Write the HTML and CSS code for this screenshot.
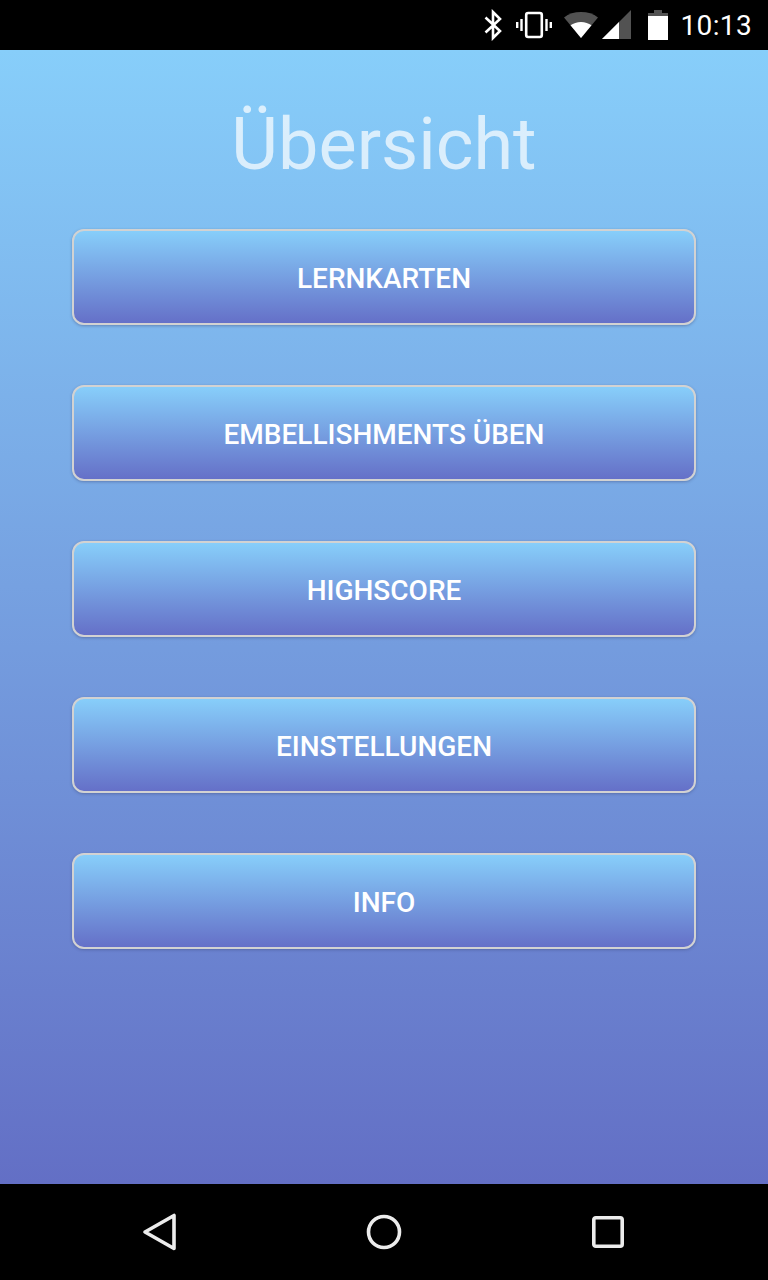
FILE: index.html
```
<!DOCTYPE html>
<html lang="de">
<head>
<meta charset="utf-8">
<title>Übersicht</title>
<link rel="stylesheet" href="styles.css">
</head>
<body>
<div class="screen">
  <header class="status">
    <svg class="ic-bt" viewBox="0 0 20 32" width="20" height="32"><path d="M2.5 8.500 17 22l-7 7V3l7 7L2.500 23.500" fill="none" stroke="#fff" stroke-width="2.600"/></svg>
    <svg class="ic-vib" viewBox="0 0 36 28" width="36" height="28"><rect x="10.200" y="2" width="15.600" height="24" rx="2" fill="none" stroke="#fff" stroke-width="2.600"/><path d="M5.500 8v12M1.200 11v6M30.500 8v12M34.800 11v6" stroke="#fff" stroke-width="2.400" fill="none"/></svg>
    <svg class="ic-wifi" viewBox="0 0 34 28" width="34" height="28"><path d="M17 27 0 6.500C4.500 2.800 10.500 1 17 1s12.500 1.800 17 5.500z" fill="#525252"/><path d="M17 27 6.500 14.300C9.300 12.300 13 11 17 11s7.700 1.300 10.500 3.300z" fill="#fff"/></svg>
    <svg class="ic-sig" viewBox="0 0 30 30" width="30" height="30"><path d="M0 29 29 0v29z" fill="#525252"/><path d="M0 29 17 12v17z" fill="#fff"/></svg>
    <svg class="ic-bat" viewBox="0 0 20 30" width="20" height="30"><path d="M6 0h8v3h6v27H0V3h6z" fill="#fff"/><path d="M6 0h8v3h6v3H0V3h6z" fill="#525252"/></svg>
    <span class="time">10:13</span>
  </header>
  <main class="main">
    <h1 class="title">Übersicht</h1>
    <nav class="menu">
      <button class="btn">Lernkarten</button>
      <button class="btn">Embellishments üben</button>
      <button class="btn">Highscore</button>
      <button class="btn">Einstellungen</button>
      <button class="btn">Info</button>
    </nav>
  </main>
  <footer class="navbar">
    <svg viewBox="0 0 36 40" width="36" height="40"><path d="M3 20 32 3.500v33z" fill="none" stroke="#ececec" stroke-width="3.600" stroke-linejoin="round"/></svg>
    <svg viewBox="0 0 36 36" width="36" height="36"><circle cx="18" cy="18" r="15.500" fill="none" stroke="#ececec" stroke-width="3.600"/></svg>
    <svg viewBox="0 0 34 34" width="34" height="34"><rect x="2.800" y="2.800" width="28.400" height="28.400" rx="2" fill="none" stroke="#ececec" stroke-width="3.600"/></svg>
  </footer>
</div>
</body>
</html>
```
FILE: styles.css
```
* { box-sizing: border-box; }
html, body { margin: 0; height: 100%; }
body { font-family: Roboto, "Liberation Sans", sans-serif; background: #000; }
.screen { width: 768px; height: 1280px; display: flex; flex-direction: column; overflow: hidden; }
.status { height: 50px; background: #000; display: flex; align-items: center; padding: 0 16px 0 0; justify-content: flex-end; color: #fff; }
.ic-bt { margin-right: 13px; }
.ic-vib { margin-right: 12px; }
.ic-wifi { margin-right: 4px; }
.ic-sig { margin-right: 16px; }
.ic-bat { margin-right: 13px; }
.time { font-size: 28px; letter-spacing: 0.35px; line-height: 50px; padding-top: 1px; }
.main { flex: 1; background: linear-gradient(#87cefa, #636fc5); display: flex; flex-direction: column; align-items: center; }
.title { margin: 52px 0 0; font-size: 72px; font-weight: 400; line-height: 86px; color: rgba(255, 255, 255, 0.7); }
.menu { margin-top: 41px; display: flex; flex-direction: column; gap: 60px; }
.btn { width: 624px; height: 96px; border: 2px solid #d2d2d2; border-radius: 12px; background: linear-gradient(#87cefa, #6570c8); box-shadow: 0 1px 3px rgba(60, 70, 120, 0.45); color: #fff; font: 500 28px Roboto, sans-serif; text-transform: uppercase; padding: 2px 0 0; }
.navbar { height: 96px; background: #000; display: flex; align-items: center; justify-content: space-between; padding: 0 143px 0 142px; }
.navbar svg:nth-child(2) { margin-left: -2px; }
```
